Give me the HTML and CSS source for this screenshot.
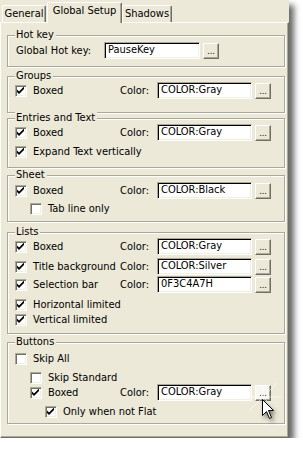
FILE: index.html
```html
<!DOCTYPE html>
<html lang="en">
<head>
    <meta charset="UTF-8">
    <title>Global Setup</title>
    <link rel="stylesheet" href="styles.css">
</head>
<body>

<div class="window">
    <div class="tabs">
        <div class="tab tabGeneral">General</div>
        <div class="tab tabActive">Global Setup</div>
        <div class="tab tabShadows">Shadows</div>
    </div>
    <div class="sheet">

        <div class="group gHotkey">
            <div class="caption">Hot key</div>
            <div class="row">
                <span class="opt hotLabel">Global Hot key:</span>
                <span class="edit hotEdit">PauseKey</span>
                <span class="btn">...</span>
            </div>
        </div>

        <div class="group gGroups">
            <div class="caption">Groups</div>
            <div class="row">
                <span class="opt"><i class="cb on"></i>Boxed</span>
                <span class="key">Color:</span>
                <span class="edit">COLOR:Gray</span>
                <span class="btn">...</span>
            </div>
        </div>

        <div class="group gEntries">
            <div class="caption">Entries and Text</div>
            <div class="row">
                <span class="opt"><i class="cb on"></i>Boxed</span>
                <span class="key">Color:</span>
                <span class="edit">COLOR:Gray</span>
                <span class="btn">...</span>
            </div>
            <div class="row small r4">
                <span class="opt"><i class="cb on"></i>Expand Text vertically</span>
            </div>
        </div>

        <div class="group gSheet">
            <div class="caption">Sheet</div>
            <div class="row r1">
                <span class="opt"><i class="cb on"></i>Boxed</span>
                <span class="key">Color:</span>
                <span class="edit">COLOR:Black</span>
                <span class="btn">...</span>
            </div>
            <div class="row small r3">
                <span class="opt in1"><i class="cb"></i>Tab line only</span>
            </div>
        </div>

        <div class="group gLists">
            <div class="caption">Lists</div>
            <div class="row">
                <span class="opt"><i class="cb on"></i>Boxed</span>
                <span class="key">Color:</span>
                <span class="edit">COLOR:Gray</span>
                <span class="btn">...</span>
            </div>
            <div class="row r3">
                <span class="opt"><i class="cb on"></i>Title background</span>
                <span class="key">Color:</span>
                <span class="edit">COLOR:Silver</span>
                <span class="btn">...</span>
            </div>
            <div class="row r1">
                <span class="opt"><i class="cb on"></i>Selection bar</span>
                <span class="key">Color:</span>
                <span class="edit">0F3C4A7H</span>
                <span class="btn">...</span>
            </div>
            <div class="row small r5">
                <span class="opt"><i class="cb on"></i>Horizontal limited</span>
            </div>
            <div class="row small r2">
                <span class="opt"><i class="cb on"></i>Vertical limited</span>
            </div>
        </div>

        <div class="group gButtons">
            <div class="caption">Buttons</div>
            <div class="row small r4">
                <span class="opt"><i class="cb"></i>Skip All</span>
            </div>
            <div class="row small r6">
                <span class="opt in1"><i class="cb"></i>Skip Standard</span>
            </div>
            <div class="row">
                <span class="opt in1"><i class="cb on"></i>Boxed</span>
                <span class="key">Color:</span>
                <span class="edit">COLOR:Gray</span>
                <span class="btn hot">...</span>
            </div>
            <div class="row small r4">
                <span class="opt in2"><i class="cb on"></i>Only when not Flat</span>
            </div>
        </div>

    </div>

    <!-- sparkle + mouse pointer over the last "..." button -->
    <svg class="sparkle" width="40" height="40" viewBox="0 0 40 40">
        <path d="M6 34 L34 6 M2 20 L38 20 M20 8 L20 32 M10 10 L30 30" stroke="#fff" stroke-width="1" opacity="0.6"/>
    </svg>
    <svg class="pointer" width="14" height="21" viewBox="0 0 14 21">
        <path d="M0.5 0.5 L0.5 16.5 L4.5 12.5 L7.5 19.5 L9.5 18.5 L6.5 11.5 L11.5 11.5 Z" fill="#fff" stroke="#000" stroke-width="1"/>
    </svg>
</div>

</body>
</html>
```

FILE: styles.css
```css
body{
    margin: 0;
    background: #FFFFFF;
    font-family: "DejaVu Sans Condensed", "DejaVu Sans", "Liberation Sans", sans-serif;
    font-size: 11px;
    color: #000;
}
.window{
    position: relative;
    width: 289px;
    height: 438px;
    background: #ece9d8;
    box-shadow: 5px 5px 6px rgba(0,0,0,.6);
}

/* tabs */
.tabs{
    display: flex;
    align-items: flex-end;
    height: 22px;
    padding-left: 2px;
}
.tab{
    box-sizing: border-box;
    height: 17px;
    line-height: 15px;
    text-align: center;
    border-top: 1px solid #fff;
    border-left: 1px solid #fff;
    border-right: 1px solid #716f64;
    box-shadow: inset -1px 0 #aca899;
    border-radius: 2px 2px 0 0;
}
.tabGeneral{
    width: 44px;
}
.tabActive{
    position: relative;
    z-index: 1;
    width: 75px;
    height: 21px;
    line-height: 16px;
    margin: 0 0 -1px 1px;
    background: #ece9d8;
}
.tabShadows{
    width: 50px;
}

/* tab sheet */
.sheet{
    box-sizing: border-box;
    height: 416px;
    padding: 0 0 0 6px;
    border-top: 1px solid #fff;
    border-left: 1px solid #fff;
    border-right: 1px solid #716f64;
    border-bottom: 1px solid #716f64;
    box-shadow: inset -1px -1px #aca899;
}

/* group boxes */
.group{
    box-sizing: border-box;
    width: 278px;
    border: 1px solid #aca899;
    box-shadow: inset 1px 1px #fff, 1px 1px #fff;
}
.caption{
    width: max-content;
    height: 12px;
    line-height: 12px;
    margin: -7px 0 0 7px;
    padding: 0 2px 0 1px;
    background: #ece9d8;
}
.gHotkey{ margin-top: 12px; padding-bottom: 7px;}
.gHotkey .row{ margin-top: 1px;}
.gGroups{ margin-top: 9px; padding-bottom: 13px;}
.gEntries{ margin-top: 5px; padding-bottom: 9px;}
.gSheet{ margin-top: 7px; padding-bottom: 6px;}
.gLists{ margin-top: 10px; padding-bottom: 7px;}
.gButtons{ margin-top: 8px; padding-bottom: 5px;}

/* rows */
.row{
    display: flex;
    align-items: center;
    height: 17px;
    padding-left: 7px;
    white-space: nowrap;
}
.row.small{ height: 13px;}
.r1{ margin-top: 1px;}
.r2{ margin-top: 2px;}
.r3{ margin-top: 3px;}
.r4{ margin-top: 4px;}
.r5{ margin-top: 5px;}
.r6{ margin-top: 6px;}

.opt{
    box-sizing: border-box;
    display: flex;
    align-items: center;
    width: 105px;
    flex: none;
}
.opt.in1{ padding-left: 15px;}
.opt.in2{ padding-left: 30px;}
.hotLabel{
    width: 89px;
    padding-left: 1px;
}
.key{
    width: 37px;
    flex: none;
}

/* checkbox */
.cb{
    box-sizing: border-box;
    width: 12px;
    height: 12px;
    margin-right: 6px;
    flex: none;
    background: #fff;
    border: 1px solid;
    border-color: #aca899 #fff #fff #aca899;
    box-shadow: inset 1px 1px #716f64, inset -1px -1px #f1efe2;
}
.cb.on{
    background: #fff url("data:image/svg+xml,%3Csvg xmlns='http://www.w3.org/2000/svg' width='10' height='10'%3E%3Cpath d='M1 3.5 L3 5.5 L8 0.5 L8 3 L3 8 L1 6 Z' fill='%23000'/%3E%3C/svg%3E") no-repeat 0 0;
}

/* edit boxes */
.edit{
    box-sizing: border-box;
    width: 95px;
    height: 17px;
    line-height: 14px;
    padding-left: 3px;
    flex: none;
    background: #fff;
    border: 1px solid;
    border-color: #aca899 #fff #fff #aca899;
    box-shadow: inset 1px 1px #000, inset -1px -1px #f1efe2;
}
.hotEdit{
    width: 96px;
}

/* "..." buttons */
.btn{
    box-sizing: border-box;
    width: 16px;
    height: 16px;
    margin-left: 3px;
    flex: none;
    line-height: 14px;
    text-align: center;
    background: #ece9d8;
    border: 1px solid;
    border-color: #fff #716f64 #716f64 #fff;
    box-shadow: inset -1px -1px #aca899;
    font-size: 9px;
}
.btn.hot{
    background: #f7f6f1;
}

.sparkle{
    position: absolute;
    left: 243px;
    top: 377px;
}
.pointer{
    position: absolute;
    left: 262px;
    top: 399px;
    filter: drop-shadow(2px 3px 2px rgba(0,0,0,.45));
}
```
